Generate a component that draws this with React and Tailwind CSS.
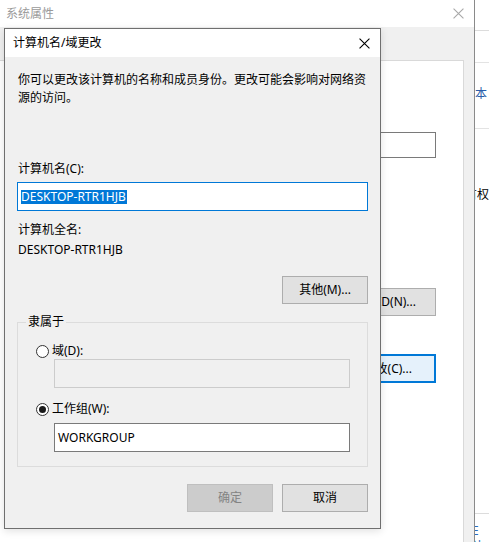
import React from 'react';

const font = "font-['Noto_Sans','Noto_Sans_CJK_SC',sans-serif]";

const CloseX = ({ size = 10, color = '#000' }) => (
  <svg width={size} height={size} viewBox="0 0 10 10">
    <path d="M0.5 0.5 L9.5 9.5 M9.5 0.5 L0.5 9.5" stroke={color} strokeWidth="1" fill="none" />
  </svg>
);

const Radio = ({ checked }) => (
  <span className="w-[13px] h-[13px] rounded-full border border-[#333] bg-white flex items-center justify-center shrink-0">
    {checked && <span className="w-[7px] h-[7px] rounded-full bg-[#1a1a1a]" />}
  </span>
);

const Button = ({ children, disabled }) => (
  <div
    className={
      disabled
        ? 'w-[86px] h-[28px] flex items-center justify-center bg-[#cccccc] border border-[#bfbfbf] text-[#838383]'
        : 'w-[86px] h-[28px] flex items-center justify-center bg-[#e1e1e1] border border-[#adadad] text-black'
    }
  >
    {children}
  </div>
);

export default function App() {
  return (
    <div className={`relative w-[489px] h-[542px] overflow-hidden bg-white text-[12px] leading-[18px] text-black ${font}`}>
      {/* far window on the right */}
      <div className="absolute inset-0 bg-white">
        <div className="absolute left-0 right-0 top-[30px] border-t border-[#dcdcdc]" />
        <div className="absolute left-0 right-0 top-[62px] border-t border-[#e3e3e3]" />
        <div className="absolute left-0 right-0 top-[128px] border-t border-[#e3e3e3]" />
        <div className="absolute left-0 right-0 top-[513px] border-t border-[#dcdcdc]" />
        <span className="absolute left-[463px] top-[85px] text-[#2a5ca8]">版本</span>
        <span className="absolute left-[465px] top-[186px]">有权</span>
        <span className="absolute left-[472px] top-[524px] leading-[14px] text-[#2a6cc0]">E N</span>
      </div>

      {/* system properties window */}
      <div className="absolute left-0 top-0 w-[475px] h-[542px] border-r border-[#8a8a8a] bg-[#f0f0f0] flex flex-col">
        <div className="h-[27px] bg-white flex items-center justify-between pl-[6px] pr-[10px] shrink-0">
          <span className="text-[#9a9a9a]">系统属性</span>
          <CloseX size={11} color="#a8a8a8" />
        </div>
        <div className="flex-1 pt-[33px] pr-[10px]">
          <div className="h-full bg-white border-t border-r border-[#d9d9d9] flex flex-col items-end pr-[27px]">
            <div className="mt-[71px] w-[120px] h-[26px] border border-[#7a7a7a] bg-white" />
            <div className="mt-[130px] w-[86px] h-[28px] bg-[#e1e1e1] border border-[#adadad] flex items-center justify-end pr-[19px]">
              <span className="whitespace-nowrap shrink-0">网络 ID(N)...</span>
            </div>
            <div className="mt-[38px] w-[86px] h-[29px] bg-[#e5f1fb] border-2 border-[#0078d7] flex items-center justify-end pr-[22px]">
              <span className="whitespace-nowrap shrink-0">更改(C)...</span>
            </div>
          </div>
        </div>
      </div>

      {/* computer name / domain change dialog */}
      <div className="absolute left-[4px] top-[28px] w-[377px] h-[501px] border border-[#6f6f6f] bg-[#f0f0f0] flex flex-col shadow-[0_2px_8px_rgba(0,0,0,0.12)]">
        <div className="h-[28px] bg-white flex items-center justify-between pl-[8px] pr-[10px] shrink-0">
          <span>计算机名/域更改</span>
          <CloseX size={11} />
        </div>

        <div className="flex flex-col px-[12px] pt-[14px]">
          <p className="pl-[1px]">
            你可以更改该计算机的名称和成员身份。更改可能会影响对网络资
            <br />
            源的访问。
          </p>

          <div className="mt-[53px] pl-[1px]">计算机名(C):</div>
          <div className="mt-[4px] h-[29px] border border-[#0078d7] bg-white flex items-center pl-[3px]">
            <span className="bg-[#0078d7] text-white leading-[14px] pr-[1px]">DESKTOP-RTR1HJB</span>
          </div>

          <div className="mt-[10px] pl-[1px]">计算机全名:</div>
          <div className="mt-[2px] pl-[1px]">DESKTOP-RTR1HJB</div>

          <div className="mt-[17px] flex justify-end">
            <Button>其他(M)...</Button>
          </div>

          <div className="relative mt-[18px] h-[145px] border border-[#dcdcdc] pl-[18px] pr-[17px] pt-[20px]">
            <span className="absolute -top-[10px] left-[8px] bg-[#f0f0f0] px-[2px]">隶属于</span>
            <div className="h-[16px] flex items-center gap-[3px]">
              <Radio />
              <span>域(D):</span>
            </div>
            <div className="ml-[18px] h-[29px] border border-[#cccccc] bg-[#f0f0f0]" />
            <div className="mt-[13px] h-[16px] flex items-center gap-[3px]">
              <Radio checked />
              <span>工作组(W):</span>
            </div>
            <div className="mt-[6px] ml-[18px] h-[29px] border border-[#7a7a7a] bg-white flex items-center pl-[3px]">
              WORKGROUP
            </div>
          </div>

          <div className="mt-[17px] flex justify-end gap-[9px]">
            <Button disabled>确定</Button>
            <Button>取消</Button>
          </div>
        </div>
      </div>
    </div>
  );
}
